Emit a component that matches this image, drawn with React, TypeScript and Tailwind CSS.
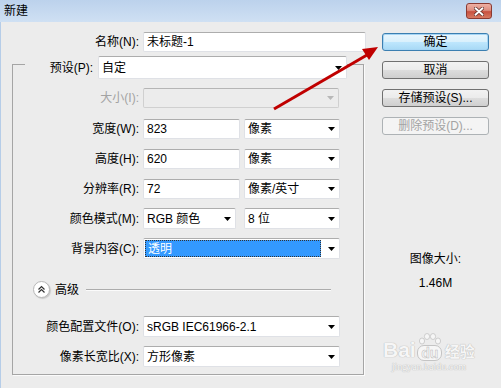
import React from "react";

const box = "bg-white border border-[#dfe1e6] border-t-[#adadad] rounded-[2px]";
const font = "[font-family:'Liberation_Sans','Noto_Sans_CJK_SC',sans-serif]";

function Arrow({ disabled }: { disabled?: boolean }) {
  return (
    <svg width="7" height="4" viewBox="0 0 7 4" className="shrink-0">
      <path d="M0 0H7L3.5 4Z" fill={disabled ? "#b8b8b8" : "#000"} />
    </svg>
  );
}

function Input({ w, value }: { w: string; value: string }) {
  return (
    <div className={`${box} ${w} h-[20px] flex items-center pl-[3px] text-[12px] text-black`}>{value}</div>
  );
}

function Select({ w, h, value, disabled }: { w: string; h: string; value?: React.ReactNode; disabled?: boolean }) {
  return (
    <div
      className={`${disabled ? "bg-[#ececec] border border-[#d0d0d0] border-t-[#b5b5b5] rounded-[2px]" : box} ${w} ${h} flex items-center justify-between pl-[3px] pr-[4px] text-[12px] text-black`}
    >
      <span className="flex items-center">{value}</span>
      <Arrow disabled={disabled} />
    </div>
  );
}

function Label({ children, disabled }: { children: React.ReactNode; disabled?: boolean }) {
  return (
    <div className={`w-[130px] pr-[4px] text-right text-[12px] ${disabled ? "text-[#a3a3a3]" : "text-black"}`}>{children}</div>
  );
}

function Button({ children, variant }: { children: React.ReactNode; variant?: "default" | "disabled" }) {
  const cls =
    variant === "default"
      ? "border-[#3c7fb1] shadow-[inset_0_0_0_1px_#a6d5f4] bg-[linear-gradient(#eaf6fd_0%,#d9f0fc_50%,#bee6fd_51%,#a7d9f5_100%)]"
      : variant === "disabled"
      ? "border-[#adb2b5] bg-[#f4f4f4] text-[#a3a3a3]"
      : "border-[#707070] bg-[linear-gradient(#f2f2f2_0%,#ebebeb_50%,#dddddd_51%,#cfcfcf_100%)]";
  return (
    <div className={`w-[107px] h-[18px] rounded-[3px] border flex items-center justify-center text-[12px] ${variant === "disabled" ? "" : "text-black"} ${cls}`}>
      {children}
    </div>
  );
}

export default function App() {
  return (
    <div className={`relative w-[501px] h-[388px] overflow-hidden bg-[#ececec] ${font} leading-[14px]`}>
      {/* title bar */}
      <div className="h-[22px] bg-[linear-gradient(#bcd2ec,#cfe0f3)] flex items-center justify-between pl-[4px] pr-[9px]">
        <span className="text-[12px] text-black">新建</span>
        <div className="w-[26px] h-[16px] rounded-[3px] border border-[#8a3a32] bg-[linear-gradient(#eeb0a4_0%,#dd8e80_45%,#c8503f_55%,#d77a62_100%)] flex items-center justify-center">
          <svg width="10" height="9" viewBox="0 0 10 9">
            <path d="M1.5 1.2L8.5 7.8M8.5 1.2L1.5 7.8" stroke="#5a2620" strokeWidth="3.4" strokeLinecap="round" />
            <path d="M1.5 1.2L8.5 7.8M8.5 1.2L1.5 7.8" stroke="#ffffff" strokeWidth="2" strokeLinecap="round" />
          </svg>
        </div>
      </div>

      {/* body */}
      <div className="flex border-l border-[#b6cde8] h-[366px]">
        {/* left */}
        <div className="w-[369px] pt-[10px]">
          <div className="flex items-center">
            <div className="w-[142px] pr-[4px] text-right text-[12px] text-black">名称(N):</div>
            <Input w="w-[223px]" value="未标题-1" />
          </div>

          <div className="ml-[11px] mt-[12px] w-[352px] h-[311px] border border-[#a5a5a5] shadow-[1px_1px_0_#fbfbfb] flex flex-col">
            <div className="-mt-[9px] flex items-center">
              <div className="ml-[12px] bg-[#ececec] h-[23px] w-[73px] flex items-center justify-end pr-[5px] text-[12px] text-black">
                预设(P):
              </div>
              <Select w="w-[249px]" h="h-[23px]" value="自定" />
            </div>

            <div className="mt-[9px] flex items-center">
              <Label disabled>大小(I):</Label>
              <Select w="w-[196px]" h="h-[20px]" disabled />
            </div>

            <div className="mt-[11px] flex items-center">
              <Label>宽度(W):</Label>
              <Input w="w-[97px]" value="823" />
              <div className="ml-[4px]">
                <Select w="w-[96px]" h="h-[20px]" value="像素" />
              </div>
            </div>

            <div className="mt-[10px] flex items-center">
              <Label>高度(H):</Label>
              <Input w="w-[97px]" value="620" />
              <div className="ml-[4px]">
                <Select w="w-[96px]" h="h-[20px]" value="像素" />
              </div>
            </div>

            <div className="mt-[10px] flex items-center">
              <Label>分辨率(R):</Label>
              <Input w="w-[97px]" value="72" />
              <div className="ml-[4px]">
                <Select w="w-[96px]" h="h-[20px]" value="像素/英寸" />
              </div>
            </div>

            <div className="mt-[9px] flex items-center">
              <Label>颜色模式(M):</Label>
              <Select w="w-[93px]" h="h-[21px]" value="RGB 颜色" />
              <div className="ml-[8px]">
                <Select w="w-[96px]" h="h-[21px]" value="8 位" />
              </div>
            </div>

            <div className="mt-[9px] flex items-center">
              <Label>背景内容(C):</Label>
              <div className={`${box} w-[197px] h-[21px] flex items-center justify-between pl-[1px] pr-[4px]`}>
                <div className="w-[176px] h-[17px] bg-[#3399ff] border border-dotted border-[#333] flex items-center pl-[2px] text-[12px] text-white">
                  透明
                </div>
                <Arrow />
              </div>
            </div>

            <div className="mt-[22px] flex items-center">
              <div className="ml-[20px] w-[17px] h-[17px] rounded-full bg-white border border-[#b8b8b8] shadow-[1px_1px_1px_#c8c8c8] flex items-center justify-center">
                <svg width="9" height="9" viewBox="0 0 9 9">
                  <path d="M1.5 4.5L4.5 1.5L7.5 4.5M1.5 7.5L4.5 4.5L7.5 7.5" stroke="#333" strokeWidth="1.2" fill="none" />
                </svg>
              </div>
              <span className="ml-[5px] text-[12px] text-black">高级</span>
              <div className="ml-[7px] w-[245px] h-[2px] border-t border-[#acacac] border-b border-b-[#fbfbfb]" />
            </div>

            <div className="mt-[18px] flex items-center">
              <Label>颜色配置文件(O):</Label>
              <Select w="w-[197px]" h="h-[21px]" value="sRGB IEC61966-2.1" />
            </div>

            <div className="mt-[9px] flex items-center">
              <Label>像素长宽比(X):</Label>
              <Select w="w-[197px]" h="h-[21px]" value="方形像素" />
            </div>
          </div>
        </div>

        {/* right */}
        <div className="flex-1 pt-[11px] pl-[12px] flex flex-col">
          <div className="flex flex-col gap-[10px]">
            <Button variant="default">确定</Button>
            <Button>取消</Button>
            <Button>存储预设(S)...</Button>
            <Button variant="disabled">删除预设(D)...</Button>
          </div>
          <div className="w-[107px] mt-[117px] text-center text-[12px] text-black">图像大小:</div>
          <div className="w-[107px] mt-[10px] text-center text-[12px] text-black">1.46M</div>
        </div>
      </div>

      {/* red annotation arrow */}
      <svg className="absolute left-0 top-0 pointer-events-none" width="501" height="388">
        <line x1="274" y1="109" x2="367" y2="55" stroke="#c00000" strokeWidth="3" />
        <polygon points="378,47 369,60 362,49" fill="#c00000" />
      </svg>

      {/* watermark */}
      <div className="absolute left-[383px] top-[333px] pointer-events-none flex flex-col items-center text-[#f6f6f6] [text-shadow:0_0_1px_#b9b9b9,0_0_1px_#b9b9b9]">
        <div className="flex items-end">
          <span className="text-[21px] font-bold leading-[22px] [font-family:'Liberation_Sans',sans-serif]">Bai</span>
          <div className="relative mx-[1px] flex flex-col items-center">
            <svg width="26" height="12" viewBox="0 0 26 12">
              <g fill="#f6f6f6" stroke="#c4c4c4" strokeWidth="0.8">
                <ellipse cx="5" cy="8" rx="2.6" ry="3" />
                <ellipse cx="10" cy="3.5" rx="2.6" ry="3" />
                <ellipse cx="16" cy="3.5" rx="2.6" ry="3" />
                <ellipse cx="21" cy="8" rx="2.6" ry="3" />
              </g>
            </svg>
            <span className="text-[14px] font-bold leading-[14px] px-[3px] rounded-[7px] border border-[#c4c4c4] bg-[#f6f6f6] [text-shadow:none] text-[#f6f6f6] [-webkit-text-stroke:0.5px_#bbb]">du</span>
          </div>
          <span className="text-[15px] font-bold leading-[18px] ml-[1px]">经验</span>
        </div>
        <span className="text-[10px] leading-[12px] [font-family:'Liberation_Serif',serif]">jingyan.baidu.com</span>
      </div>
    </div>
  );
}
